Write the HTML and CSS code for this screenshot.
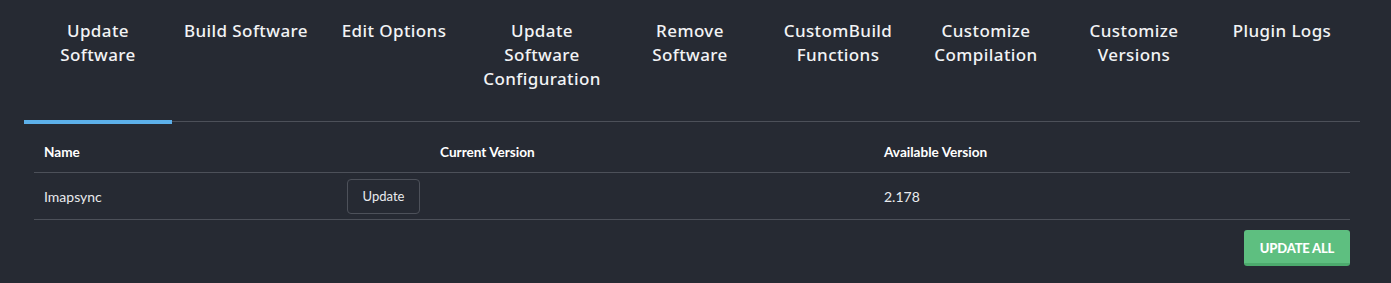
FILE: index.html
```html
<!DOCTYPE html>
<html lang="en">
<head>
<meta charset="utf-8">
<title>Software</title>
<link rel="stylesheet" href="styles.css">
</head>
<body>
<div class="page">
  <nav class="tabs">
    <a class="tab active">Update Software</a>
    <a class="tab">Build Software</a>
    <a class="tab">Edit Options</a>
    <a class="tab">Update Software Configuration</a>
    <a class="tab">Remove Software</a>
    <a class="tab">CustomBuild Functions</a>
    <a class="tab">Customize Compilation</a>
    <a class="tab">Customize Versions</a>
    <a class="tab">Plugin Logs</a>
  </nav>
  <div class="panel">
    <div class="table">
      <div class="row head">
        <div class="cell">Name</div>
        <div class="cell"></div>
        <div class="cell">Current Version</div>
        <div class="cell">Available Version</div>
      </div>
      <div class="row body">
        <div class="cell">Imapsync</div>
        <div class="cell"><button class="btn-outline">Update</button></div>
        <div class="cell"></div>
        <div class="cell">2.178</div>
      </div>
    </div>
    <div class="actions">
      <button class="btn-green">UPDATE ALL</button>
    </div>
  </div>
</div>
</body>
</html>
```

FILE: styles.css
```css
html, body {
  margin: 0;
  padding: 0;
  background: #262a33;
  color: #eceef1;
  height: 100%;
}
.page {
  padding: 0 31px 0 24px;
}
.tabs {
  display: flex;
  border-bottom: 1px solid #4c5059;
  height: 122px;
  box-sizing: border-box;
}
.tab {
  position: relative;
  width: 148px;
  flex: 0 0 148px;
  box-sizing: border-box;
  padding: 19px 9px 0;
  text-align: center;
  font-family: "Noto Sans", sans-serif;
  font-weight: 500;
  font-size: 17px;
  letter-spacing: 0.4px;
  line-height: 24px;
  color: #f2f3f5;
  cursor: pointer;
}
.tab.active::after {
  content: "";
  position: absolute;
  left: 0;
  right: 0;
  bottom: -3px;
  height: 4px;
  background: #5cb0ea;
}
.panel {
  padding: 10px 10px 0;
}
.table {
  font-family: Lato, sans-serif;
  font-size: 14px;
}
.row {
  display: grid;
  grid-template-columns: 303px 93px 444px 1fr;
  border-bottom: 1px solid #4c5059;
  align-items: center;
}
.row.head {
  height: 40px;
  font-weight: 700;
  font-size: 13.6px;
  color: #ffffff;
}
.row.body {
  height: 46px;
  color: #e9ebee;
}
.cell {
  padding: 0 10px;
}
.btn-outline {
  font-family: Lato, sans-serif;
  font-size: 13px;
  color: #e9ebee;
  background: transparent;
  border: 1px solid #4d515a;
  border-radius: 4px;
  height: 35px;
  width: 73px;
  padding: 0;
  cursor: pointer;
}
.actions {
  display: flex;
  justify-content: flex-end;
  padding-top: 10px;
}
.btn-green {
  font-family: Lato, sans-serif;
  font-weight: 900;
  font-size: 13px;
  letter-spacing: -0.2px;
  color: #ffffff;
  background: #5ebf80;
  border: none;
  border-bottom: 3px solid #4caa6d;
  border-radius: 3px;
  width: 106px;
  height: 36px;
  padding: 2px 0 0;
  cursor: pointer;
}
```
